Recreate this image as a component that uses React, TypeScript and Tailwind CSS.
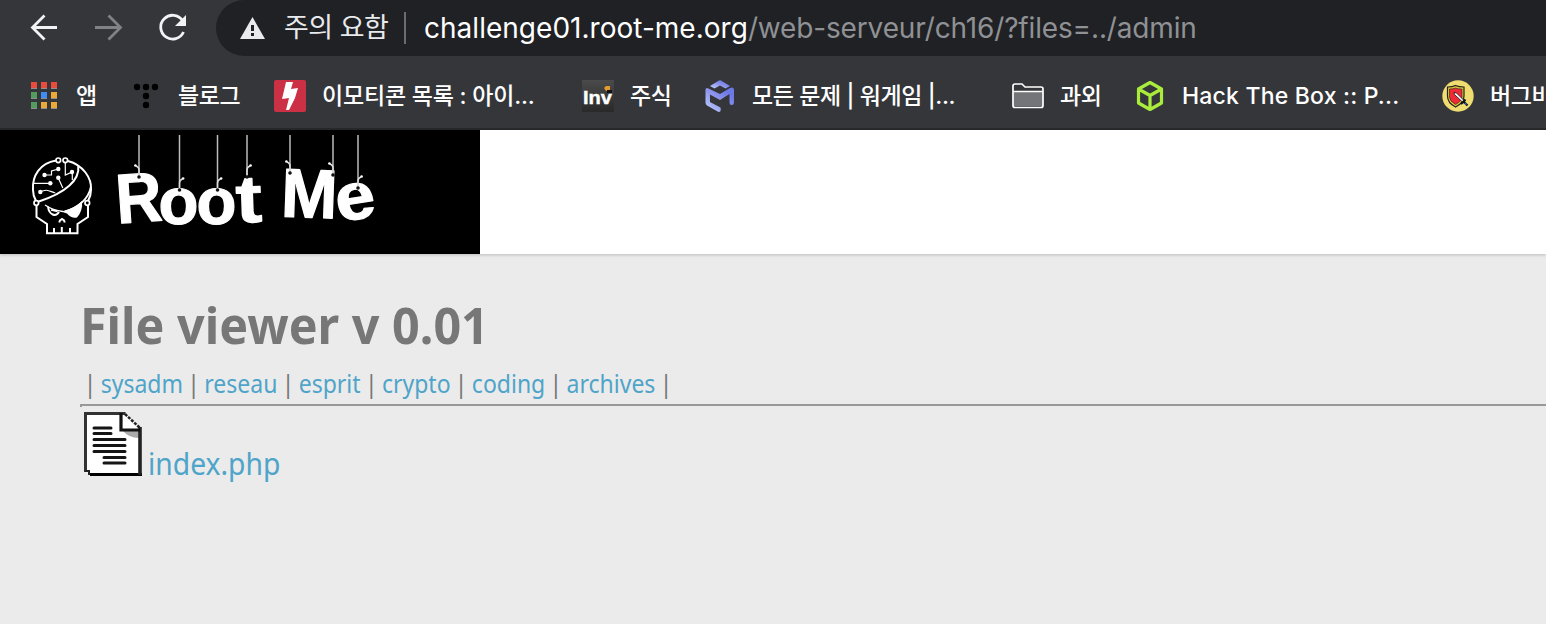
import { FC, ReactNode } from "react";

interface IBookmark {
  label: string;
  icon: ReactNode;
  width: string;
  text: string;
}

const AppsIcon = () => (
  <svg width="32" height="32" viewBox="0 0 32 32">
    {[
      ["#ea4c3b", "#ea4c3b", "#ea4c3b"],
      ["#529c5d", "#3f8cf3", "#eba937"],
      ["#529c5d", "#eba937", "#eba937"],
    ].map((row, y) =>
      row.map((color, x) => (
        <g key={`${x}-${y}`}>
          <rect x={3 + x * 10} y={2 + y * 10} width="6" height="7" fill="#8d8e90" />
          <rect x={3 + x * 10} y={2 + y * 10} width="6" height="6" fill={color} />
        </g>
      ))
    )}
  </svg>
);

const TistoryIcon = () => (
  <svg width="32" height="32" viewBox="0 0 32 32" fill="#000">
    <circle cx="7" cy="7" r="3.2" />
    <circle cx="16" cy="7" r="3.2" />
    <circle cx="25" cy="7" r="3.2" />
    <circle cx="16" cy="16" r="3.2" />
    <circle cx="16" cy="25" r="3.2" />
  </svg>
);

const BoltIcon = () => (
  <svg width="32" height="32" viewBox="0 0 32 32">
    <rect width="32" height="32" rx="2" fill="#cb3044" />
    <path d="M12 2h7l-2 7 7-1-3 10-6 12h-3l3-12-7 1z" fill="#fff" />
  </svg>
);

const InvIcon = () => (
  <svg width="32" height="32" viewBox="0 0 32 32">
    <defs>
      <linearGradient id="inv" x1="0" y1="0" x2="0" y2="1">
        <stop stopColor="#4b4b4b" />
        <stop offset="1" stopColor="#292929" />
      </linearGradient>
    </defs>
    <rect width="32" height="32" fill="url(#inv)" />
    <path d="M22 8l2-2h4v5h-4z" fill="#e59a2c" />
    <path d="M25 10h5v3h-5z" fill="#111" />
    <text
      x="1"
      y="24"
      fontSize="18"
      textLength="29"
      lengthAdjust="spacingAndGlyphs"
      className="fill-white font-['Liberation_Sans'] font-bold"
      stroke="#fff"
      strokeWidth=".4"
    >
      Inv
    </text>
  </svg>
);

const DreamhackIcon = () => (
  <svg width="32" height="32" viewBox="0 0 32 32">
    <defs>
      <linearGradient id="dream" x1="1" y1="0" x2="0" y2="1">
        <stop offset=".2" stopColor="#6c79e6" />
        <stop offset=".55" stopColor="#9399ee" />
        <stop offset="1" stopColor="#bed2fc" />
      </linearGradient>
    </defs>
    <path d="M6 6l9-5.500q1-.5 2 0L26 6l-4.500 2.500L16 5.500 10.500 8.500z" fill="url(#dream)" />
    <path
      d="M1.500 10q0-3 3-1.500L16 14l10-6q3.500-1.500 4 1.500v13q0 2.500-2.300 2.500-2.200 0-2.200-2.500v-8.500L16 20 6 14.500v7.500L16.500 27.500q1 4.500-2 4.500L3 25.500q-1.500-1-1.500-3z"
      fill="url(#dream)"
    />
  </svg>
);

const FolderIcon = () => (
  <svg width="32" height="32" viewBox="0 0 32 32">
    <path d="M1 11.500h30V26H1z" fill="#747578" />
    <path
      d="M1 6q0-2 2-2h7l3 3h16q2 0 2 2v16.500q0 2-2 2H3q-2 0-2-2zM1 11.500h30"
      fill="none"
      stroke="#fff"
      strokeWidth="1.700"
    />
  </svg>
);

const HtbIcon = () => (
  <svg width="32" height="32" viewBox="0 0 32 32">
    <path
      d="M16 2.500L27.500 9v14L16 29.500 4.500 23V9zM4.500 9L16 15.500 27.500 9M16 15.500v14"
      fill="none"
      stroke="#a9ec3c"
      strokeWidth="3.200"
      strokeLinejoin="round"
    />
  </svg>
);

const BugIcon = () => (
  <svg width="32" height="32" viewBox="0 0 32 32">
    <circle cx="16" cy="16" r="15.700" fill="#f0dd70" />
    <path
      d="M5.500 7q5 0 8-1.500Q17 7 22 7v9q0 7-8.500 11Q5.500 23 5.500 16z"
      fill="#e0c93b"
      stroke="#222"
      strokeWidth="1.200"
    />
    <path d="M7.500 9q3.500 0 6-1 2.500 1 6.500 1v8q0 4-6.500 7.500-6-3.500-6-7.500z" fill="#ed2a35" stroke="#222" strokeWidth=".6" />
    <path d="M12 12.500l2.500.5 8 8-1.500 1.500-8.500-8z" fill="#fff" stroke="#111" strokeWidth=".8" />
    <path d="M19 24l4.500-4.500M22 22l3.500 3.500" stroke="#111" strokeWidth="2.200" />
    <path d="M23 23l1.500 1.500" stroke="#2c6cc9" strokeWidth="1.500" />
  </svg>
);

const bookmarks: IBookmark[] = [
  { label: "앱", icon: <AppsIcon />, width: "w-[102px]", text: "" },
  { label: "블로그", icon: <TistoryIcon />, width: "w-[144px]", text: "tracking-[-0.4px]" },
  { label: "이모티콘 목록 : 아이...", icon: <BoltIcon />, width: "w-[308px]", text: "tracking-[-0.2px]" },
  { label: "주식", icon: <InvIcon />, width: "w-[122px]", text: "tracking-[-0.3px]" },
  { label: "모든 문제 | 워게임 |...", icon: <DreamhackIcon />, width: "w-[308px]", text: "tracking-[-0.4px]" },
  { label: "과외", icon: <FolderIcon />, width: "w-[122px]", text: "tracking-[-0.3px]" },
  { label: "Hack The Box :: P...", icon: <HtbIcon />, width: "w-[308px]", text: "tracking-[0.2px]" },
  { label: "버그바", icon: <BugIcon />, width: "w-[104px]", text: "tracking-[-0.3px]" },
];

const Bookmark: FC<{ item: IBookmark }> = ({ item }) => (
  <div className={`flex shrink-0 items-center gap-4 ${item.width}`}>
    <span className="shrink-0">{item.icon}</span>
    <span className={`whitespace-nowrap ${item.text}`}>{item.label}</span>
  </div>
);

const Toolbar = () => (
  <div className="flex h-14 items-center">
    <svg width="216" height="56" viewBox="0 0 216 56" fill="none" strokeWidth="2.800" className="shrink-0">
      <path d="M57 27.500H33M44.500 15.500l-12 12 12 12" stroke="#f1f3f4" />
      <path d="M95 27.500h24M108.500 15.500l12 12-12 12" stroke="#818286" />
      <path d="M182.500 20.500A11.900 11.900 0 1 0 183.500 32" stroke="#f1f3f4" />
      <path d="M186 15v11h-11z" fill="#f1f3f4" />
    </svg>
    <div className="flex h-14 grow items-center rounded-l-full bg-[#202124] pl-6 text-[28px]">
      <svg width="26" height="24" viewBox="0 0 26 24" className="shrink-0">
        <path d="M12.500 1L25 23H0z" fill="#e8eaed" />
        <path d="M11 9h3v6h-3zM11 17h3v3h-3z" fill="#202124" />
      </svg>
      <span className="ml-[18px] w-[104px] shrink-0 pt-px text-[27px] tracking-[-0.5px] whitespace-nowrap text-[#e8eaed]">
        주의 요함
      </span>
      <span className="ml-4 h-8 w-[2px] shrink-0 bg-[#6b6c70]" />
      <span className="ml-[18px] tracking-[-0.15px] whitespace-nowrap text-[#8f9194]">
        <span className="tracking-[0.02px] text-white">challenge01.root-me.org</span>
        /web-serveur/ch16/?files=../admin
      </span>
    </div>
  </div>
);

const letters = [
  { char: "R", at: "translate(117.500 223.500) rotate(-4) scale(.91 1)", size: 70 },
  { char: "o", at: "translate(158.500 223.500) scale(.99 1)", size: 66 },
  { char: "o", at: "translate(196.500 223.500) scale(.99 1)", size: 66 },
  { char: "t", at: "translate(236.500 222.500) rotate(-2) scale(1.170 1)", size: 67 },
  { char: "M", at: "translate(280.500 216.500) rotate(2) scale(.98 1)", size: 69 },
  { char: "e", at: "translate(338.500 222) rotate(-9) scale(1.080 1)", size: 66 },
];

const strings = [
  { x: 139, y: 176, curl: -3 },
  { x: 179.500, y: 189, curl: 3 },
  { x: 217.500, y: 189, curl: 3 },
  { x: 247, y: 176, curl: 3 },
  { x: 290, y: 172, curl: -3 },
  { x: 333, y: 174, curl: -3 },
  { x: 358, y: 187, curl: 3 },
];

const Logo = () => (
  <svg width="480" height="124" viewBox="0 130 480 124" className="block bg-black">
    <g fill="none" stroke="#fff" strokeWidth="2">
      <path d="M56 160.500C40 163 32 176 33 190q0 6 3 11M68 161c15 4 24 17 23 29q0 6-3 11" />
      <path d="M78.300 165.500C80 180 66 193 37.500 202M91 187C88 200 77 208 65 211.500" />
      <path d="M36.500 205.500V217l10.500 7v9.300h30.500V224l10.500-7v-11.500M54 233v-5M61.800 233v-6M70 233v-5" />
      <path d="M59.200 222.500l.8-2 2-1.500 2 1.500.8 2M48 206.500c1 9 8 10.500 11 5.500" />
      <path d="M45 205q8 5.500 18 6.500M51 210l6.500 1.500" strokeWidth="1.300" />
      <g strokeWidth="1.200">
        <path d="M44.500 175h7v-4l7-2M33.500 183.300h17M58.300 178l4.500 10M40.300 192c7-4 10 0 15 1M65.300 163v12l7-3v8" />
      </g>
      <g fill="#000" strokeWidth="1.700">
        <circle cx="58.300" cy="160.300" r="2.300" />
        <circle cx="65.300" cy="160.300" r="2.300" />
        <circle cx="36.300" cy="203" r="2.300" />
        <circle cx="87.300" cy="203" r="2.300" />
      </g>
    </g>
    <g fill="#fff">
      <path d="M61 211.500Q74 209 82 201q1 10-5 16.500-5 1.500-10-4z" />
      <circle cx="44.500" cy="175" r="2.200" />
      <circle cx="58.300" cy="169" r="2.200" />
      <circle cx="58.300" cy="177.700" r="2.200" />
      <circle cx="50.300" cy="183.300" r="2.200" />
      <circle cx="40.300" cy="192" r="2.200" />
      <circle cx="72" cy="172" r="2.200" />
    </g>
    {letters.map((l, i) => (
      <text
        key={i}
        transform={l.at}
        fontSize={l.size}
        stroke="#fff"
        strokeWidth="1.200"
        strokeLinejoin="round"
        className="fill-white font-['Liberation_Sans'] font-bold"
      >
        {l.char}
      </text>
    ))}
    {strings.map((s) => (
      <g key={s.x}>
        <path d={`M${s.x} 135V${s.y}`} stroke="#bbb" strokeWidth="1.500" />
        <path
          d={`M${s.x} ${s.y - 1}v-5q0-3 ${s.curl} -4`}
          fill="none"
          stroke="#ddd"
          strokeWidth="1.500"
        />
        <circle cx={s.x + s.curl * 1.2} cy={s.y - 10.5} r="1.300" fill="#fff" />
        <circle cx={s.x} cy={s.y + 1} r="1.800" fill="#111" />
      </g>
    ))}
  </svg>
);

const FileIcon = () => (
  <svg width="60" height="66" viewBox="0 0 60 66" className="shrink-0">
    <path d="M2 2h40l15 15v47H8l-6-4z" fill="#fff" />
    <path d="M40 19h16v8q-10 0-16-7z" fill="#aaa" />
    <path d="M2.500 61V2.500h40" fill="none" stroke="#333" strokeWidth="3" />
    <path d="M2 60h4v3h50" fill="none" stroke="#222" strokeWidth="2" />
    <path d="M7 63.500h52" stroke="#000" strokeWidth="3" />
    <path d="M57 16v48" stroke="#222" strokeWidth="3.600" />
    <path d="M38 2v17h19" fill="none" stroke="#111" strokeWidth="3.200" />
    <path d="M42 3l15 14" stroke="#222" strokeWidth="2.500" strokeDasharray="3 1.200" />
    <path
      d="M11 17h17M11 22.500h17M11 28.500h31M11 34.500h31M11 40.500h31M21 46.500h21M21 52h21"
      stroke="#151515"
      strokeWidth="3"
      strokeLinecap="round"
    />
  </svg>
);

const folders = ["sysadm", "reseau", "esprit", "crypto", "coding", "archives"];

const App = () => {
  return (
    <div className="h-[624px] w-full overflow-hidden bg-[#ebebeb] font-['Inter','Noto_Sans_CJK_KR',sans-serif]">
      <header className="h-[130px] overflow-hidden border-b-2 border-[#28292b] bg-[#35363a]">
        <Toolbar />
        <nav className="flex h-[72px] items-center pt-2 pl-7 text-[23px] font-medium text-white">
          {bookmarks.map((item) => (
            <Bookmark key={item.label} item={item} />
          ))}
        </nav>
      </header>
      <div className="h-[124px] bg-white shadow-[0_1px_3px_rgba(0,0,0,0.2)]">
        <Logo />
      </div>
      <main className="pt-[35px] pl-20 font-['Noto_Sans',sans-serif] text-[#777]">
        <h1 className="h-[72px] origin-left scale-x-[0.95] text-[51px] leading-[70px] font-bold whitespace-nowrap">
          File viewer v 0.01
        </h1>
        <div className="flex h-[43px] origin-left scale-x-[0.92] items-center gap-[4.7px] pt-[2px] pl-[4px] text-[25px]">
          <span>|</span>
          {folders.map((name) => (
            <span key={name} className="flex gap-[4.7px]">
              <a href="#" className="text-[#4fa4c9]">
                {name}
              </a>
              <span>|</span>
            </span>
          ))}
        </div>
        <hr className="h-[3px] border-t-2 border-l-2 border-[#999]" />
        <div className="flex pt-1 pl-[3px]">
          <FileIcon />
          <a href="#" className="ml-[5px] origin-left scale-x-[0.912] pt-[32px] text-[31px] leading-[41px] text-[#4fa4c9]">
            index.php
          </a>
        </div>
      </main>
    </div>
  );
};
export default App;
